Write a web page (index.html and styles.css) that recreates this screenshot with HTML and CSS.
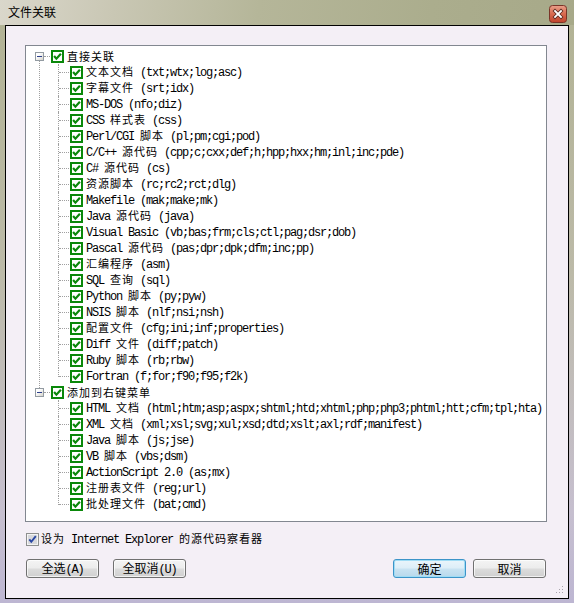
FILE: index.html
```html
<!DOCTYPE html>
<html>
<head>
<meta charset="utf-8">
<title>文件关联</title>
<link rel="stylesheet" href="styles.css">
</head>
<body>
<svg class="defs" width="0" height="0" aria-hidden="true">
  <defs>
    <symbol id="ck" viewBox="0 0 13 13">
      <rect x="0" y="0" width="13" height="13" fill="#0a880a"/>
      <rect x="2" y="2" width="9" height="9" fill="#ffffff"/>
      <path d="M3.1 6.1 L5.4 8.7 L9.9 3.7" fill="none" stroke="#0a880a" stroke-width="2.2"/>
    </symbol>
    <symbol id="ck2" viewBox="0 0 13 13">
      <rect x="0.5" y="0.5" width="12" height="12" fill="#f4f4f4" stroke="#8e8f8f"/>
      <rect x="2" y="2" width="9" height="9" fill="#d8d8dc"/>
      <path d="M3.3 6.3 L5.3 8.8 L9.8 3.2" fill="none" stroke="#2a47a4" stroke-width="1.9"/>
    </symbol>
  </defs>
</svg>
<div class="window">
  <div class="titlebar">
    <span class="title">文件关联</span>
    <span class="close">
      <svg width="18" height="18" viewBox="0 0 18 18">
        <defs>
          <linearGradient id="cg" x1="0" y1="0" x2="0" y2="1">
            <stop offset="0" stop-color="#e9a08a"/>
            <stop offset="0.5" stop-color="#d86a4f"/>
            <stop offset="1" stop-color="#c0432c"/>
          </linearGradient>
        </defs>
        <rect x="0.5" y="0.5" width="17" height="17" rx="3" fill="url(#cg)" stroke="#7a3528"/>
        <path d="M6 6 L12 12 M12 6 L6 12" stroke="#5a2a20" stroke-width="3.4" stroke-linecap="square"/>
        <path d="M6 6 L12 12 M12 6 L6 12" stroke="#ffffff" stroke-width="1.8" stroke-linecap="square"/>
      </svg>
    </span>
  </div>
  <div class="client">
    <div class="tree">
      <ul class="roots">
        <li class="root">
          <div class="row"><span class="exp"></span><svg class="cb"><use href="#ck"/></svg><span class="lbl">直接关联</span></div>
          <ul class="kids">
            <li class="kid row"><svg class="cb"><use href="#ck"/></svg><span class="lbl">文本文档<span class="m"> (txt;wtx;log;asc)</span></span></li>
            <li class="kid row"><svg class="cb"><use href="#ck"/></svg><span class="lbl">字幕文件<span class="m"> (srt;idx)</span></span></li>
            <li class="kid row"><svg class="cb"><use href="#ck"/></svg><span class="lbl"><span class="m">MS-DOS (nfo;diz)</span></span></li>
            <li class="kid row"><svg class="cb"><use href="#ck"/></svg><span class="lbl"><span class="m">CSS </span>样式表<span class="m"> (css)</span></span></li>
            <li class="kid row"><svg class="cb"><use href="#ck"/></svg><span class="lbl"><span class="m">Perl/CGI </span>脚本<span class="m"> (pl;pm;cgi;pod)</span></span></li>
            <li class="kid row"><svg class="cb"><use href="#ck"/></svg><span class="lbl"><span class="m">C/C++ </span>源代码<span class="m"> (cpp;c;cxx;def;h;hpp;hxx;hm;inl;inc;pde)</span></span></li>
            <li class="kid row"><svg class="cb"><use href="#ck"/></svg><span class="lbl"><span class="m">C# </span>源代码<span class="m"> (cs)</span></span></li>
            <li class="kid row"><svg class="cb"><use href="#ck"/></svg><span class="lbl">资源脚本<span class="m"> (rc;rc2;rct;dlg)</span></span></li>
            <li class="kid row"><svg class="cb"><use href="#ck"/></svg><span class="lbl"><span class="m">Makefile (mak;make;mk)</span></span></li>
            <li class="kid row"><svg class="cb"><use href="#ck"/></svg><span class="lbl"><span class="m">Java </span>源代码<span class="m"> (java)</span></span></li>
            <li class="kid row"><svg class="cb"><use href="#ck"/></svg><span class="lbl"><span class="m">Visual Basic (vb;bas;frm;cls;ctl;pag;dsr;dob)</span></span></li>
            <li class="kid row"><svg class="cb"><use href="#ck"/></svg><span class="lbl"><span class="m">Pascal </span>源代码<span class="m"> (pas;dpr;dpk;dfm;inc;pp)</span></span></li>
            <li class="kid row"><svg class="cb"><use href="#ck"/></svg><span class="lbl">汇编程序<span class="m"> (asm)</span></span></li>
            <li class="kid row"><svg class="cb"><use href="#ck"/></svg><span class="lbl"><span class="m">SQL </span>查询<span class="m"> (sql)</span></span></li>
            <li class="kid row"><svg class="cb"><use href="#ck"/></svg><span class="lbl"><span class="m">Python </span>脚本<span class="m"> (py;pyw)</span></span></li>
            <li class="kid row"><svg class="cb"><use href="#ck"/></svg><span class="lbl"><span class="m">NSIS </span>脚本<span class="m"> (nlf;nsi;nsh)</span></span></li>
            <li class="kid row"><svg class="cb"><use href="#ck"/></svg><span class="lbl">配置文件<span class="m"> (cfg;ini;inf;properties)</span></span></li>
            <li class="kid row"><svg class="cb"><use href="#ck"/></svg><span class="lbl"><span class="m">Diff </span>文件<span class="m"> (diff;patch)</span></span></li>
            <li class="kid row"><svg class="cb"><use href="#ck"/></svg><span class="lbl"><span class="m">Ruby </span>脚本<span class="m"> (rb;rbw)</span></span></li>
            <li class="kid row"><svg class="cb"><use href="#ck"/></svg><span class="lbl"><span class="m">Fortran (f;for;f90;f95;f2k)</span></span></li>
          </ul>
        </li>
        <li class="root">
          <div class="row"><span class="exp"></span><svg class="cb"><use href="#ck"/></svg><span class="lbl">添加到右键菜单</span></div>
          <ul class="kids">
            <li class="kid row"><svg class="cb"><use href="#ck"/></svg><span class="lbl"><span class="m">HTML </span>文档<span class="m"> (html;htm;asp;aspx;shtml;htd;xhtml;php;php3;phtml;htt;cfm;tpl;hta)</span></span></li>
            <li class="kid row"><svg class="cb"><use href="#ck"/></svg><span class="lbl"><span class="m">XML </span>文档<span class="m"> (xml;xsl;svg;xul;xsd;dtd;xslt;axl;rdf;manifest)</span></span></li>
            <li class="kid row"><svg class="cb"><use href="#ck"/></svg><span class="lbl"><span class="m">Java </span>脚本<span class="m"> (js;jse)</span></span></li>
            <li class="kid row"><svg class="cb"><use href="#ck"/></svg><span class="lbl"><span class="m">VB </span>脚本<span class="m"> (vbs;dsm)</span></span></li>
            <li class="kid row"><svg class="cb"><use href="#ck"/></svg><span class="lbl"><span class="m">ActionScript 2.0 (as;mx)</span></span></li>
            <li class="kid row"><svg class="cb"><use href="#ck"/></svg><span class="lbl">注册表文件<span class="m"> (reg;url)</span></span></li>
            <li class="kid row"><svg class="cb"><use href="#ck"/></svg><span class="lbl">批处理文件<span class="m"> (bat;cmd)</span></span></li>
          </ul>
        </li>
      </ul>
    </div>
    <div class="option">
      <svg class="cb2"><use href="#ck2"/></svg>
      <span class="lbl">设为<span class="m"> Internet Explorer </span>的源代码察看器</span>
    </div>
    <div class="buttons">
      <button class="btn">全选<span class="m">(A)</span></button>
      <button class="btn">全取消<span class="m">(U)</span></button>
      <span class="spacer"></span>
      <button class="btn default">确定</button>
      <button class="btn">取消</button>
    </div>
    <svg class="grip" width="8" height="8" viewBox="0 0 8 8">
      <rect x="6" y="0" width="1" height="1" fill="#a8a4ac"/>
      <rect x="3" y="3" width="1" height="1" fill="#a8a4ac"/>
      <rect x="6" y="3" width="1" height="1" fill="#a8a4ac"/>
      <rect x="0" y="6" width="1" height="1" fill="#a8a4ac"/>
      <rect x="3" y="6" width="1" height="1" fill="#a8a4ac"/>
      <rect x="6" y="6" width="1" height="1" fill="#a8a4ac"/>
    </svg>
  </div>
</div>
</body>
</html>
```

FILE: styles.css
```css
* { box-sizing: border-box; }
html, body { margin: 0; padding: 0; background: #ffffff; }
body {
  font-family: "Noto Sans CJK SC", "Noto Sans", sans-serif;
  font-size: 12px;
  color: #000;
}
.defs { position: absolute; width: 0; height: 0; overflow: hidden; }

.window {
  width: 574px;
  height: 603px;
  padding: 0 5px 4px 5px;
  display: flex;
  flex-direction: column;
  background: linear-gradient(to bottom, #b1b293 0%, #bcbaa8 45%, #c6bfcf 85%, #bdb6d2 100%);
}

.titlebar {
  height: 25px;
  margin: 0 -5px;
  padding: 0 7px 0 8px;
  display: flex;
  align-items: flex-start;
  justify-content: space-between;
  background: linear-gradient(100deg, #dad7cb 0%, #c9c7b4 20%, #b5b699 45%, #abad8d 75%, #a7a989 100%);
}
.title {
  line-height: 16px;
  margin-top: 4px;
  font-size: 12px;
}
.close {
  width: 18px;
  height: 18px;
  margin-top: 5px;
  display: block;
}
.close svg { display: block; }

.client {
  position: relative;
  flex: 1;
  border: 1px solid #000;
  background: #f4eff6;
  padding: 19px 21px 20px 19px;
  display: flex;
  flex-direction: column;
}

.tree {
  height: 477px;
  flex: none;
  border: 1px solid #828790;
  background: #fff;
  padding-top: 2px;
  overflow: hidden;
}
ul { list-style: none; margin: 0; padding: 0; }

.root { position: relative; }
.root:not(:last-child)::before {
  content: "";
  position: absolute;
  left: 13px;
  top: 8px;
  bottom: -8px;
  border-left: 1px dotted #a0a0a0;
}
.row {
  display: flex;
  align-items: center;
  height: 16px;
  white-space: nowrap;
  position: relative;
}
.root > .row { padding-left: 9px; }
.root > .row::after {
  content: "";
  position: absolute;
  left: 18px;
  width: 6px;
  top: 8px;
  border-top: 1px dotted #a0a0a0;
}
.exp {
  width: 9px;
  height: 9px;
  flex: none;
  border: 1px solid #939ba2;
  background: linear-gradient(135deg, #ffffff 30%, #d6d3cb 100%);
  position: relative;
  z-index: 1;
  margin-right: 7px;
}
.exp::after {
  content: "";
  position: absolute;
  left: 1px;
  top: 3px;
  width: 5px;
  height: 1px;
  background: #2c3f8c;
}
.cb {
  width: 13px;
  height: 13px;
  flex: none;
  margin-right: 3px;
  display: block;
}
.lbl {
  font-size: 11px;
  letter-spacing: 1px;
  line-height: 16px;
}
.kid { padding-left: 44px; }
.kid::before {
  content: "";
  position: absolute;
  left: 32px;
  top: 0;
  bottom: 0;
  border-left: 1px dotted #a0a0a0;
}
.kid:last-child::before { bottom: auto; height: 9px; }
.kid::after {
  content: "";
  position: absolute;
  left: 33px;
  top: 8px;
  width: 10px;
  border-top: 1px dotted #a0a0a0;
}
.m {
  font-family: "Liberation Mono", monospace;
  font-size: 12px;
  letter-spacing: -1.2px;
}

.option {
  margin-top: 9px;
  height: 16px;
  display: flex;
  align-items: center;
  padding-left: 1px;
  flex: none;
}
.cb2 {
  width: 13px;
  height: 13px;
  flex: none;
  margin-right: 2px;
  display: block;
}

.buttons {
  margin-top: 12px;
  height: 19px;
  display: flex;
  padding: 0 1px;
  flex: none;
}
.spacer { flex: 1; }
.btn {
  width: 73px;
  height: 19px;
  padding: 0;
  font-family: "Noto Sans CJK SC", "Noto Sans", sans-serif;
  font-size: 12px;
  line-height: 16px;
  color: #000;
  border: 1px solid #707070;
  border-radius: 3px;
  background: linear-gradient(to bottom, #f4f4f4 0%, #ececec 48%, #dcdcdc 52%, #d0d0d0 100%);
  box-shadow: inset 0 0 0 1px rgba(255,255,255,0.7);
}
.btn + .btn { margin-left: 14px; }
.spacer + .btn { margin-left: 0; }
.btn.default + .btn { margin-left: 7px; }
.btn.default {
  border-color: #3c94c8;
  background: linear-gradient(to bottom, #eaf5fb 0%, #ddeef8 48%, #c9e3f2 52%, #b8d9ec 100%);
  box-shadow: inset 0 0 0 1px #9fdcf5;
}

.grip {
  position: absolute;
  right: 4px;
  bottom: 4px;
}
```
